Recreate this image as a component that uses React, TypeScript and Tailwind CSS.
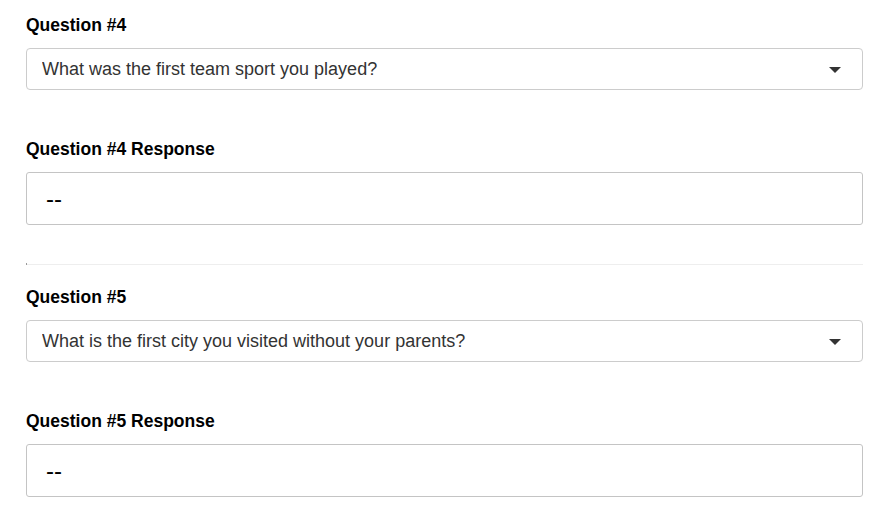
import { ChangeEvent, useState } from "react";

const questionsA = [
  "What was the first team sport you played?",
  "What was the name of your first pet?",
  "What street did you grow up on?",
];

const questionsB = [
  "What is the first city you visited without your parents?",
  "What was your childhood nickname?",
  "What is your favorite book?",
];

interface QuestionBlockProps {
  index: number;
  options: string[];
  value: string;
  onChange: (v: string) => void;
  response: string;
}

const QuestionBlock = ({ index, options, value, onChange, response }: QuestionBlockProps) => (
  <div className="flex flex-col">
    <label className="mb-[13px] text-[17.5px] font-bold leading-[20px] text-black">
      Question #{index}
    </label>
    <div className="relative">
      <select
        value={value}
        onChange={(e: ChangeEvent<HTMLSelectElement>) => onChange(e.target.value)}
        className="h-[42px] w-full appearance-none rounded-[4px] border border-[#cccccc] bg-white pl-[15px] pr-10 text-[18px] text-[#333333] outline-none"
      >
        {options.map((o) => (
          <option key={o}>{o}</option>
        ))}
      </select>
      <svg
        className="pointer-events-none absolute right-[22px] top-[19px]"
        width="12"
        height="6"
        viewBox="0 0 12 6"
      >
        <path d="M0 0 L12 0 L6 6 Z" fill="#333333" />
      </svg>
    </div>

    <label className="mt-[49px] mb-[13px] text-[17.5px] font-bold leading-[20px] text-black">
      Question #{index} Response
    </label>
    <div className="flex h-[53px] items-center rounded-[3px] border border-[#c4c4c4] bg-white pl-[19px]">
      <span className="text-[24px] leading-none text-black">{response}</span>
    </div>
  </div>
);

export default function App() {
  const [q4, setQ4] = useState(questionsA[0]);
  const [q5, setQ5] = useState(questionsB[0]);

  return (
    <div
      className="min-h-screen w-[896px] bg-white px-[26px] pt-[15px]"
      style={{ fontFamily: '"Liberation Sans", Arial, sans-serif' }}
    >
      <div className="w-[837px]">
        <QuestionBlock index={4} options={questionsA} value={q4} onChange={setQ4} response="--" />

        {/* section divider */}
        <div className="mt-[38px] flex items-end">
          <div className="h-[2px] w-px bg-[#999999]" />
          <div className="h-px flex-1 bg-[#eeeeee]" />
        </div>

        <div className="mt-[22px]">
          <QuestionBlock index={5} options={questionsB} value={q5} onChange={setQ5} response="--" />
        </div>
      </div>
    </div>
  );
}
